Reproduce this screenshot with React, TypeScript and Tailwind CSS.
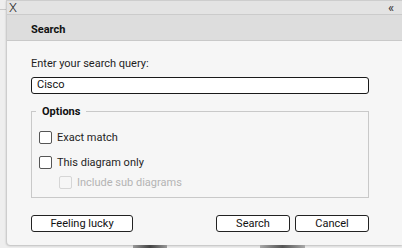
import React from "react";

const font = { fontFamily: "Roboto, 'Liberation Sans', sans-serif" };

const Box = ({ disabled }: { disabled?: boolean }) => (
  <span
    className={
      "block h-[13px] w-[13px] shrink-0 rounded-[2px] border " +
      (disabled ? "border-[#d6d6d6] bg-[#f6f6f6]" : "border-[#555555] bg-white")
    }
  />
);

const Check = ({
  label,
  disabled,
  className,
}: {
  label: string;
  disabled?: boolean;
  className: string;
}) => (
  <div className={"flex h-[13px] items-center gap-[5px] " + className}>
    <Box disabled={disabled} />
    <span className={"text-[11px] leading-[13px] " + (disabled ? "text-[#b4b4b4]" : "text-[#1e1e1e]")}>
      {label}
    </span>
  </div>
);

const Btn = ({ children, w }: { children: React.ReactNode; w: string }) => (
  <button
    className={
      "flex h-[17px] items-center justify-center rounded-[3px] border border-[#222222] bg-white text-[11px] leading-none text-[#111111] " +
      w
    }
  >
    {children}
  </button>
);

export default function App() {
  return (
    <div className="flex h-[248px] w-[402px] flex-col overflow-hidden bg-[#eeeeee]" style={font}>
      <div className="flex h-[245px]">
        <div className="w-[6px] shrink-0 pt-[9px]">
          <div className="h-px bg-[#c8c8c8]" />
        </div>
        <div className="flex flex-1 flex-col overflow-hidden rounded-bl-[4px] border-l border-t border-[#cdcdcd] bg-[#f6f6f6] shadow-[0_1px_2px_rgba(0,0,0,0.2)]">
          <div className="flex h-[14px] shrink-0 items-center justify-between border-b border-[#cbcbcb] bg-[#e3e3e3] pl-[2px] pr-[8px]">
            <span className="text-[13px] font-light leading-[12px] text-[#222222]">X</span>
            <span className="text-[13px] leading-[12px] text-[#333333]">«</span>
          </div>
          <div className="flex h-[26px] shrink-0 items-center border-b border-[#c9c9c9] bg-[#dddddd] pl-[24px] pt-[4px]">
            <span className="text-[11px] font-bold leading-[13px] text-[#111111]">Search</span>
          </div>
          <div className="flex flex-col pl-[24px] pr-[33px] pt-[16px]">
            <div className="text-[11px] leading-[13px] text-[#1e1e1e]">Enter your search query:</div>
            <div className="mt-[7px] flex h-[17px] items-center rounded-[3px] border border-[#1a1a1a] bg-white pl-[5px] text-[11px] text-[#111111]">
              Cisco
            </div>
            <fieldset className="mt-[11px] rounded-none border border-[#c9c9c9] pb-[8px] pl-[4px]">
              <legend className="px-[6px] text-[11px] font-bold leading-[13px] text-[#111111]">Options</legend>
              <Check label="Exact match" className="ml-[3px] mt-[13px]" />
              <Check label="This diagram only" className="ml-[3px] mt-[12px]" />
              <Check label="Include sub diagrams" disabled className="ml-[23px] mt-[7px]" />
            </fieldset>
            <div className="mt-[17px] flex items-center">
              <Btn w="w-[102px]">Feeling lucky</Btn>
              <div className="ml-auto flex gap-[5px]">
                <Btn w="w-[74px]">Search</Btn>
                <Btn w="w-[74px]">Cancel</Btn>
              </div>
            </div>
          </div>
        </div>
      </div>
      <div className="flex h-[3px] items-stretch">
        <div className="w-[133px]" />
        <div className="w-[34px] bg-gradient-to-r from-[#9a9a9a] via-[#444444] to-[#9a9a9a]" />
        <div className="w-[93px]" />
        <div className="w-[45px] bg-gradient-to-r from-[#aaaaaa] via-[#555555] to-[#aaaaaa]" />
      </div>
    </div>
  );
}
